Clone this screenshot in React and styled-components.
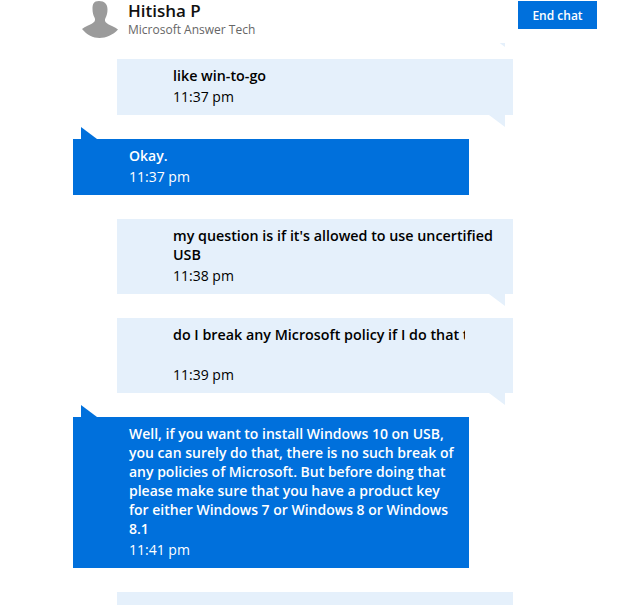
import styled, { createGlobalStyle } from "styled-components";

const GlobalStyle = createGlobalStyle`
  html, body {
    margin: 0;
    padding: 0;
    background: #fff;
    overflow: hidden;
    font-family: "Open Sans", "Noto Sans", sans-serif;
  }
`;

const Page = styled.div`
  width: 629px;
  height: 605px;
  overflow: hidden;
`;

const Header = styled.header`
  display: flex;
  align-items: flex-start;
  height: 43px;
  padding-left: 82px;
  padding-right: 32px;
  box-sizing: border-box;
`;

const Avatar = styled.svg`
  width: 36px;
  height: 38px;
  flex: none;
`;

const Agent = styled.div`
  margin-left: 10px;
  flex: 1;
`;

const AgentName = styled.div`
  font-size: 17px;
  font-weight: 600;
  line-height: 22px;
  color: #111;
`;

const AgentRole = styled.div`
  font-size: 12px;
  line-height: 16px;
  color: #666;
`;

const EndButton = styled.button`
  width: 79px;
  height: 28px;
  margin-top: 1px;
  border: 0;
  padding: 0;
  background: #0070dc;
  color: #fff;
  font-family: inherit;
  font-size: 12px;
  font-weight: 600;
`;

const Messages = styled.div`
  height: 562px;
  overflow: hidden;
  display: flex;
  flex-direction: column;
  gap: 24px;
`;

const Bubble = styled.div`
  position: relative;
  flex: none;
  width: 396px;
  box-sizing: border-box;
  padding: 7px 12px 9px 56px;
  margin-left: ${(p) => (p.$mine ? "117px" : "73px")};
  background: ${(p) => (p.$mine ? "#e5f0fb" : "#0070dc")};
  color: ${(p) => (p.$mine ? "#000" : "#fff")};
  font-size: 14px;
  line-height: 19px;

  &::after {
    content: "";
    position: absolute;
    width: 16px;
    height: 12px;
    background: inherit;
    ${(p) =>
      p.$mine
        ? `
      right: 8px;
      top: 100%;
      clip-path: polygon(0 0, 100% 0, 100% 100%);
    `
        : `
      left: 8px;
      bottom: 100%;
      clip-path: polygon(0 0, 100% 100%, 0 100%);
    `}
  }
`;

const ScrolledOff = styled(Bubble)`
  height: 32px;
  margin-top: -40px;
`;

const Text = styled.div`
  font-weight: 600;
  font-size: ${(p) => (p.$mine ? "14.3px" : "14px")};
`;

const ClippedText = styled(Text)`
  width: 292px;
  height: 38px;
  overflow: hidden;
  white-space: nowrap;
`;

const Time = styled.div`
  font-weight: 400;
  margin-top: 2px;
`;

const messages = [
  { mine: true, text: "like win-to-go", time: "11:37 pm" },
  { mine: false, text: "Okay.", time: "11:37 pm" },
  { mine: true, text: "my question is if it's allowed to use uncertified USB", time: "11:38 pm" },
  { mine: true, clipped: true, text: "do I break any Microsoft policy if I do that too", time: "11:39 pm" },
  {
    mine: false,
    text: "Well, if you want to install Windows 10 on USB, you can surely do that, there is no such break of any policies of Microsoft. But before doing that please make sure that you have a product key for either Windows 7 or Windows 8 or Windows 8.1",
    time: "11:41 pm",
  },
  { mine: true, text: "", time: "" },
];

export default function App() {
  return (
    <Page>
      <GlobalStyle />
      <Header>
        <Avatar viewBox="0 0 36 38">
          <path
            fill="#9b9b9b"
            d="M17 1c5.500 0 8.500 3 8.500 8.500 0 3.500-.8 6.500-2 8.500-.7 1.200-.7 3 0 4 1 1.500 4 3 7 4.300 2 .9 4 2 5.500 3.200C31 35 24 38 17.500 38 11 38 5 35 0 29c1.500-1.200 3.500-2.300 5.500-3.200 3-1.300 6-2.800 7-4.300.7-1 .7-2.800 0-4-1.200-2-2-5-2-8.500C10.500 4 11.500 1 17 1z"
          />
        </Avatar>
        <Agent>
          <AgentName>Hitisha P</AgentName>
          <AgentRole>Microsoft Answer Tech</AgentRole>
        </Agent>
        <EndButton>End chat</EndButton>
      </Header>
      <Messages>
        <ScrolledOff $mine />
        {messages.map((m, i) => (
          <Bubble key={i} $mine={m.mine}>
            {m.clipped ? (
              <ClippedText $mine={m.mine}>{m.text}</ClippedText>
            ) : (
              <Text $mine={m.mine}>{m.text}</Text>
            )}
            <Time>{m.time}</Time>
          </Bubble>
        ))}
      </Messages>
    </Page>
  );
}
